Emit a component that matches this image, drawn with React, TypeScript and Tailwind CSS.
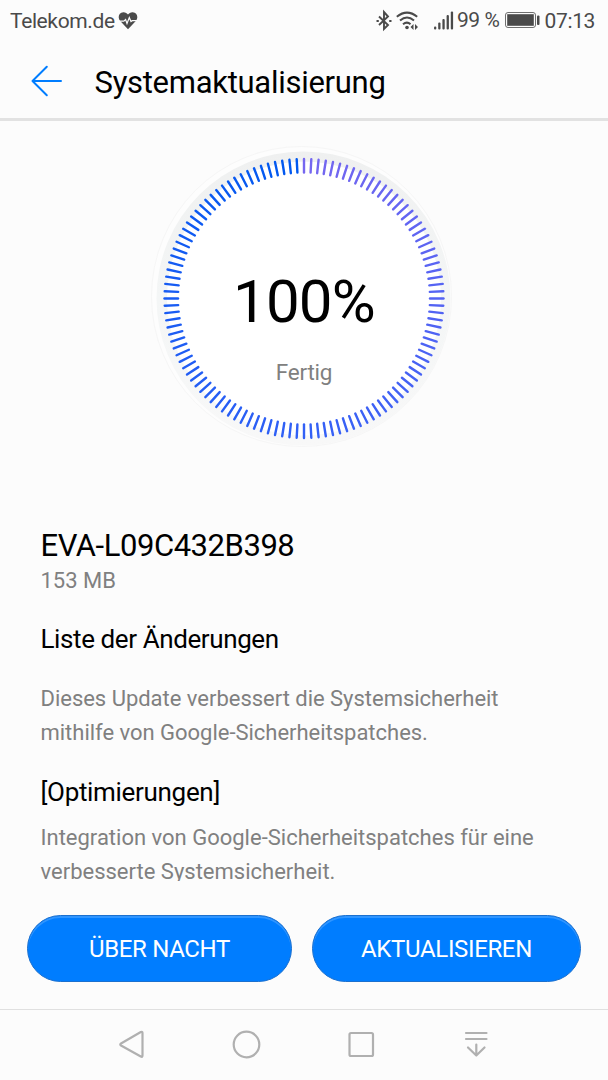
const mix = (a: number[], b: number[], t: number) =>
  `rgb(${a.map((v, i) => Math.round(v + (b[i] - v) * t)).join(",")})`;

const TICKS = Array.from({ length: 120 }, (_, i) => i);

function tickColor(i: number) {
  const t = i / 119;
  const start = [118, 103, 240];
  const mid = [50, 96, 246];
  const end = [0, 88, 240];
  return t < 0.5 ? mix(start, mid, t * 2) : mix(mid, end, (t - 0.5) * 2);
}

function StatusBar() {
  return (
    <div className="flex h-[42px] items-center pl-[10px] pr-[13px] text-[21px] leading-[42px] tracking-[-0.38px] text-[#4a4a4a]">
      <span>Telekom.de</span>
      <svg className="ml-[3px] h-[20px] w-[20px]" viewBox="0 0 20 20">
        <path d="M10 18.2 2.2 10C-.6 6.500.6 1.500 5.300 1.200 7.400 1.100 9 2.100 10 3.600 11 2.100 12.600 1.100 14.700 1.200 19.400 1.500 20.600 6.500 17.800 10Z" fill="#4a4a4a" />
        <path d="M0 10.200H5.800L7.600 8.600 9 12.500 11.300 6.500 13 10.600 14.200 9.700H20" fill="none" stroke="#fcfcfc" strokeWidth="1.200" />
      </svg>
      <div className="flex-1" />
      <svg className="h-[24px] w-[16px]" viewBox="0 0 16 24" fill="none" stroke="#4a4a4a" strokeWidth="1.900">
        <path d="M3 7.500 12 16 8 20V3L12 7.500 3 16" />
        <path d="M.5 12H2.800M13.200 12H15.500" strokeWidth="2.200" />
      </svg>
      <svg className="ml-[4px] h-[24px] w-[24px]" viewBox="0 0 24 24" fill="none" stroke="#4a4a4a" strokeWidth="2">
        <path d="M.8 7.700Q11 -.5 21.200 7.700M4 11.500Q11 5.500 18 11.500M7 15.300Q11 12 14.500 15.300" />
        <circle cx="11" cy="18.500" r="1.800" fill="#4a4a4a" stroke="none" />
        <path d="M17.500 15V21L14.500 18ZM19 15V21L22 18Z" fill="#4a4a4a" stroke="none" />
      </svg>
      <svg className="ml-[14px] h-[24px] w-[20px]" viewBox="0 0 20 24" fill="#4a4a4a">
        <rect x="0" y="17.500" width="2.300" height="3" rx="1" />
        <rect x="4.200" y="13.500" width="2.300" height="7" rx="1" />
        <rect x="8.400" y="10" width="2.300" height="10.500" rx="1" />
        <rect x="12.600" y="6" width="2.300" height="14.500" rx="1" />
        <rect x="16.800" y="2.500" width="2.300" height="18" rx="1" />
      </svg>
      <span className="relative -top-px ml-[3px]">99 %</span>
      <svg className="ml-[5px] h-[18px] w-[36px]" viewBox="0 0 36 18">
        <rect x=".5" y=".5" width="30" height="15" rx="2.500" fill="none" stroke="#4a4a4a" strokeWidth=".8" />
        <rect x="2.200" y="2.200" width="26.600" height="11.600" fill="#4a4a4a" />
        <rect x="32" y="3.500" width="2.500" height="9.500" rx="1" fill="#4a4a4a" />
      </svg>
      <span className="ml-[4px]">07:13</span>
    </div>
  );
}

function Header() {
  return (
    <header className="flex h-[79px] items-center border-b-[3px] border-[#e2e2e2] pl-[31px] pt-px">
      <svg className="h-[32px] w-[32px]" viewBox="0 0 32 32" fill="none" stroke="#007dff" strokeWidth="2" strokeLinecap="round" strokeLinejoin="round">
        <path d="M30 16H1.500M15.800 1.800 1.500 16 15.800 30.200" />
      </svg>
      <h1 className="ml-[31.5px] pt-[4px] text-[31px] leading-[40px] tracking-[-0.28px] text-black">Systemaktualisierung</h1>
    </header>
  );
}

function Dial() {
  return (
    <div className="relative mx-auto h-[320px] w-[320px]">
      <svg className="absolute inset-0 h-full w-full" viewBox="0 0 320 320">
        <defs>
          <linearGradient id="ring" x1="0" y1="0" x2="0" y2="1">
            <stop offset="0" stopColor="#eff0f0" />
            <stop offset="0.5" stopColor="#f4f6f6" />
            <stop offset="1" stopColor="#f8f8f8" />
          </linearGradient>
        </defs>
        <circle cx="157.500" cy="156.500" r="150" fill="#fdfdfd" stroke="#f6f6f6" />
        <circle cx="159.500" cy="158.500" r="147" fill="url(#ring)" />
        <circle cx="160" cy="158.500" r="137" fill="#fff" />
        {TICKS.map((i) => (
          <line key={i} x1="160" x2="160" y1="19" y2="32.500" stroke={tickColor(i)} strokeWidth="2.400" strokeLinecap="round" transform={`rotate(${i * 3} 160 158.500)`} />
        ))}
      </svg>
      <div className="relative pt-[127px] text-center text-[60px] leading-[70px] tracking-[-0.8px] text-black">100%</div>
      <div className="relative pt-[20px] text-center text-[22.5px] leading-[30px] tracking-[-0.2px] text-[#808080]">Fertig</div>
    </div>
  );
}

function PillButton({ label }: { label: string }) {
  return (
    <button className="h-[67px] w-full rounded-full border border-[#1b70cf] bg-[#007dff] text-[24px] tracking-[-0.35px] text-white shadow-[inset_0_2px_0_#2f95ff]">
      {label}
    </button>
  );
}

function NavBar() {
  return (
    <nav className="flex h-[71px] items-center border-t border-[#e0e0e0] pl-[116px] text-[#b0b0b0]">
      <svg className="h-[32px] w-[376px]" viewBox="0 0 376 32" fill="none" stroke="currentColor" strokeWidth="2.200" strokeLinecap="round" strokeLinejoin="round">
        <path d="M26.500 4V26.500Q26.500 28.500 24.800 27.500L5 16.500Q3.500 15.500 5 14.500L24.800 3Q26.500 2.200 26.500 4Z" />
        <circle cx="130.500" cy="15.500" r="12.800" />
        <rect x="233.500" y="4" width="23.500" height="23" rx="1.500" />
        <path d="M350 4H370.500M350 10H370.500M360.300 15.500V26.500M352 18.500 360.300 26.500 368.500 18.500" />
      </svg>
    </nav>
  );
}

export default function App() {
  return (
    <div className="flex h-[1080px] w-[608px] flex-col overflow-hidden bg-[#fcfcfc] font-['Roboto',sans-serif]">
      <StatusBar />
      <Header />
      <main className="h-[760px] overflow-hidden pt-[19px]">
        <Dial />
        <section className="pl-[40.5px] pt-[66px]">
          <h2 className="text-[31px] leading-[40px] tracking-[-0.45px] text-black">EVA-L09C432B398</h2>
          <p className="text-[22px] leading-[30px] text-[#808080]">153 MB</p>
          <h3 className="mt-[27px] text-[26px] leading-[32px] tracking-[-0.4px] text-black">Liste der Änderungen</h3>
          <p className="mt-[27px] text-[22px] leading-[34px] tracking-[-0.02px] whitespace-nowrap text-[#808080]">
            Dieses Update verbessert die Systemsicherheit<br />mithilfe von Google-Sicherheitspatches.
          </p>
          <h3 className="mt-[26px] text-[26px] leading-[32px] tracking-[-0.32px] text-black">[Optimierungen]</h3>
          <p className="mt-[13px] text-[22px] leading-[34px] whitespace-nowrap text-[#808080]">
            Integration von Google-Sicherheitspatches für eine<br />verbesserte Systemsicherheit.
          </p>
        </section>
      </main>
      <footer className="grid h-[128px] grid-cols-[265px_269px] gap-5 pl-[27px] pt-[34px]">
        <PillButton label="ÜBER NACHT" />
        <PillButton label="AKTUALISIEREN" />
      </footer>
      <NavBar />
    </div>
  );
}
